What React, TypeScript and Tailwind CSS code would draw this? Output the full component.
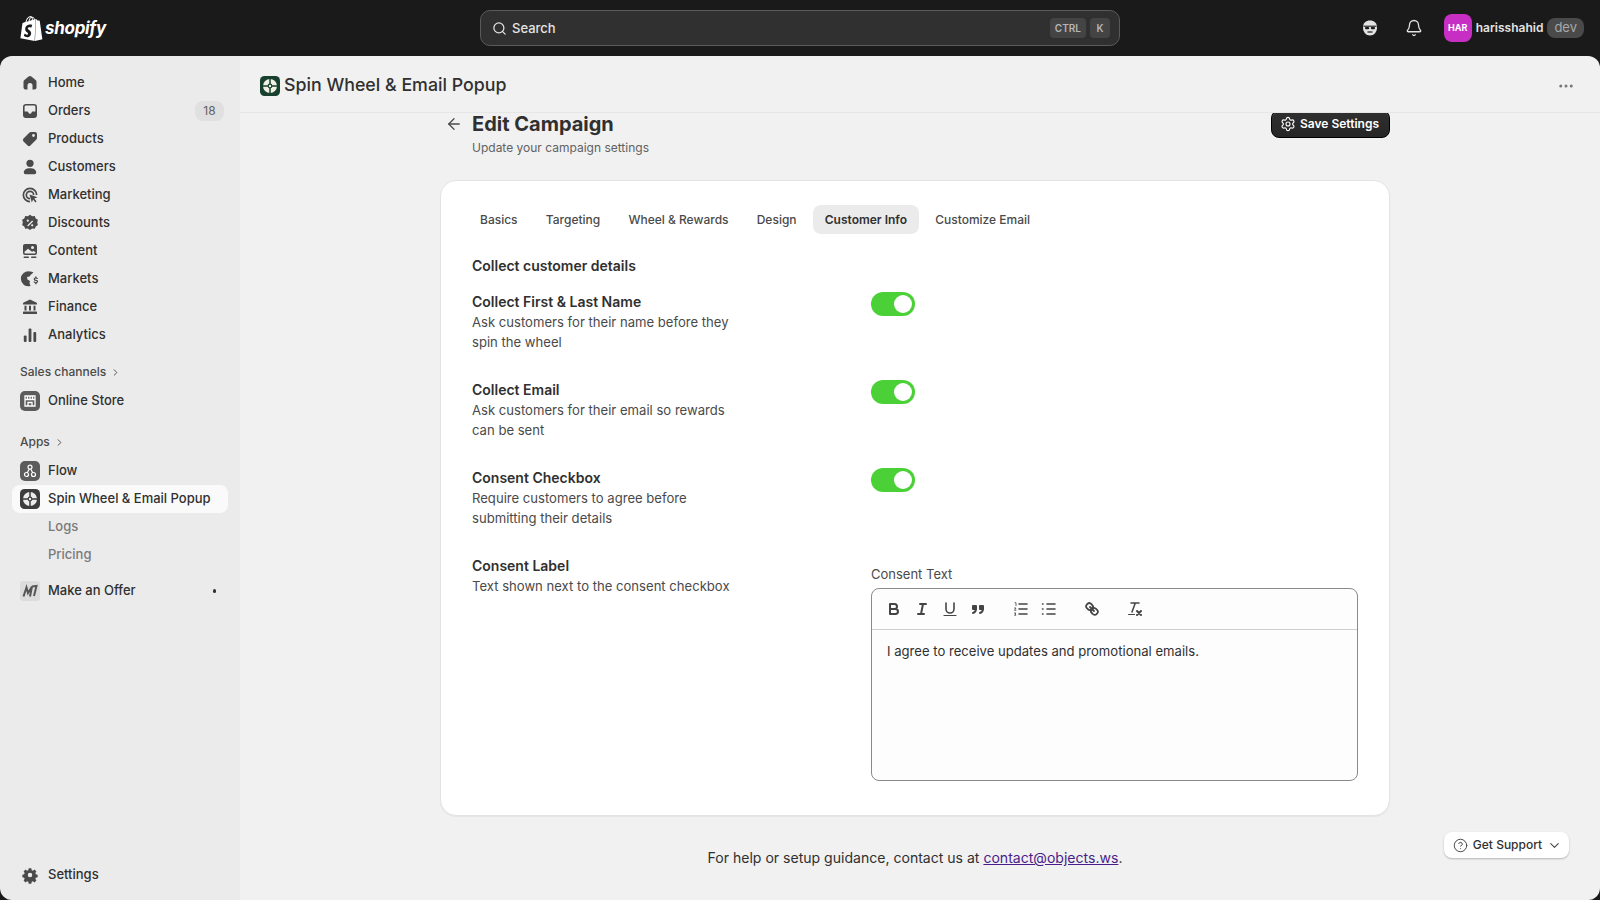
import { ArrowLeft, Bell, ChevronDown, ChevronRight, CircleHelp, Ellipsis, Search, Settings } from "lucide-react"
import { SiShopify } from "react-icons/si"
import type { ReactNode } from "react"

function Ico({ children, size = 20 }: { children: ReactNode; size?: number }) {
  return (
    <svg width={size} height={size} viewBox="0 0 20 20" fill="currentColor" className="shrink-0">
      {children}
    </svg>
  )
}

const HomeIcon = () => <Ico><path d="M8.6 3.6a2.2 2.2 0 0 1 2.8 0l4.2 3.4c.6.4.9 1.1.9 1.8v5.7c0 1.1-.9 2-2 2h-2v-4a2.5 2.5 0 0 0-5 0v4h-2a2 2 0 0 1-2-2V8.800c0-.7.3-1.400.9-1.800z" /></Ico>
const OrdersIcon = () => <Ico><path fillRule="evenodd" d="M6 3h8a3 3 0 0 1 3 3v8a3 3 0 0 1-3 3H6a3 3 0 0 1-3-3V6a3 3 0 0 1 3-3m-1.400 7.500V6c0-.8.6-1.400 1.400-1.400h8c.8 0 1.400.6 1.400 1.400v4.500h-2.400c-.8 0-1.300.5-1.500 1.200-.2.600-.7 1-1.500 1s-1.300-.4-1.500-1c-.2-.7-.7-1.200-1.500-1.200z" /></Ico>
const TagIcon = () => <Ico><path fillRule="evenodd" d="M11 3h4a2 2 0 0 1 2 2v4c0 .6-.2 1.100-.6 1.500l-6 6a2 2 0 0 1-2.800 0l-4.100-4.100a2 2 0 0 1 0-2.800l6-6c.4-.4.9-.6 1.500-.6m2.500 4.900a1.400 1.400 0 1 0 0-2.800 1.400 1.400 0 0 0 0 2.800" /></Ico>
const PersonIcon = () => <Ico><circle cx="10" cy="6.300" r="3.600" /><path d="M3.800 15.500c0-2.700 2.500-4.200 6.200-4.200s6.200 1.500 6.200 4.200c0 1-.8 1.700-1.700 1.700h-9c-.9 0-1.700-.7-1.700-1.700" /></Ico>
const TargetIcon = () => (
  <Ico>
    <path d="M10 2.500a7.500 7.500 0 0 1 7.500 7.500h-1.700A5.800 5.800 0 1 0 10 15.800v1.700a7.500 7.500 0 0 1 0-15" />
    <path d="M10 5.500a4.500 4.500 0 0 1 4.500 4.500h-1.700A2.800 2.800 0 1 0 10 12.800v1.700a4.500 4.500 0 0 1 0-9" />
    <path d="M9.500 9.500l8 2.700-3.200 1.400 2.300 2.800-1.200 1-2.300-2.800-1.300 3z" />
  </Ico>
)
const DiscountIcon = () => (
  <Ico>
    <path fillRule="evenodd" d="M10 1.800l2.200 1.400 2.600-.2.900 2.400 2.200 1.400-.7 2.600.7 2.600-2.200 1.400-.9 2.400-2.600-.2-2.200 1.400-2.200-1.400-2.600.2-.9-2.400-2.200-1.400.7-2.600-.7-2.600 2.200-1.400.9-2.400 2.600.2zM7.800 8.800a1.100 1.100 0 1 0 0-2.200 1.100 1.100 0 0 0 0 2.200m4.400 4.600a1.100 1.100 0 1 0 0-2.200 1.100 1.100 0 0 0 0 2.200m-5-.9l.9.9 5-5-.9-.9z" />
  </Ico>
)
const ContentIcon = () => (
  <Ico>
    <path fillRule="evenodd" d="M5 3h10a2 2 0 0 1 2 2v7a2 2 0 0 1-2 2H5a2 2 0 0 1-2-2V5c0-1.100.9-2 2-2m7.500 5a1.500 1.500 0 1 0 0-3 1.500 1.500 0 0 0 0 3M4.500 10.800V11.800c0 .4.300.7.700.7h9.600c.4 0 .7-.3.7-.7V11l-2-1-1.500.8-4-3z" />
    <rect x="3.500" y="15.500" width="5.500" height="1.500" rx=".7" />
    <rect x="11" y="15.500" width="5.500" height="1.500" rx=".7" />
  </Ico>
)
const MarketsIcon = () => (
  <Ico>
    <path d="M10 2.500c1.300 0 2.500.3 3.500.9L11 5.500l-1.500 2-2.500.5.500 2.500 2.500 1.500-.5 2 1 3a7.500 7.500 0 1 1-.5-14.500" />
    <path d="M15.200 7.500h1.300v1.100c.8.200 1.400.7 1.500 1.500h-1.300c-.1-.4-.4-.6-.9-.6s-.9.200-.9.600c0 .3.300.5 1 .6 1.300.2 2.200.7 2.200 1.800 0 .9-.7 1.500-1.600 1.700v1.100h-1.300v-1.100c-1-.2-1.600-.8-1.700-1.700h1.300c.1.400.5.700 1.100.7s1-.2 1-.6c0-.3-.3-.5-1.100-.6-1.200-.2-2.100-.6-2.100-1.800 0-.9.700-1.500 1.500-1.700z" />
  </Ico>
)
const BankIcon = () => (
  <Ico>
    <path d="M10 2.500l6.300 3c.5.200.7.600.7 1.100v.9H3v-.9c0-.5.200-.9.700-1.100z" />
    <rect x="4.500" y="8.700" width="2" height="4.800" /><rect x="9" y="8.700" width="2" height="4.800" /><rect x="13.500" y="8.700" width="2" height="4.800" />
    <rect x="3" y="14.500" width="14" height="2.500" rx=".6" />
  </Ico>
)
const ChartIcon = () => (
  <Ico>
    <rect x="3.800" y="10.500" width="2.800" height="6.500" rx="1" /><rect x="8.600" y="3.500" width="2.800" height="13.500" rx="1" /><rect x="13.400" y="7" width="2.800" height="10" rx="1" />
  </Ico>
)

// white disc split into four lobes by dark spokes, small white hub in the middle
function WheelMark({ bg, hub = "#ececec" }: { bg: string; hub?: string }) {
  return (
    <svg width="20" height="20" viewBox="0 0 20 20" className="shrink-0">
      <rect width="20" height="20" rx="4.500" fill={bg} />
      <circle cx="10" cy="10" r="7" fill={hub} />
      <path d="M10 2.500v15M2.500 10h15" stroke={bg} strokeWidth="1.500" />
      <circle cx="10" cy="10" r="2.400" fill={bg} />
      <circle cx="10" cy="10" r="1.200" fill={hub} />
    </svg>
  )
}

function AppTile({ children }: { children: ReactNode }) {
  return <span className="flex h-5 w-5 shrink-0 items-center justify-center rounded-[5px] bg-[#5c5c5c] text-white">{children}</span>
}

const StoreIcon = () => (
  <AppTile>
    <svg width="16" height="16" viewBox="0 0 16 16" fill="none" stroke="currentColor" strokeWidth="1.300">
      <path d="M3 3h10v10H3zM3 6.500h10M5.500 3v3.500M8 3v3.500M10.500 3v3.500M6 13V9.500h4V13" />
    </svg>
  </AppTile>
)
const FlowIcon = () => (
  <AppTile>
    <svg width="16" height="16" viewBox="0 0 16 16" fill="none" stroke="currentColor" strokeWidth="1.200">
      <circle cx="8" cy="4.200" r="2" /><circle cx="4.500" cy="11.500" r="2" /><circle cx="11.500" cy="11.500" r="2" />
      <path d="M7.200 6L5.300 9.700M8.800 6l1.900 3.700" />
    </svg>
  </AppTile>
)
const OfferIcon = () => (
  <span className="flex h-5 w-5 shrink-0 items-center justify-center rounded-[3px] bg-[#dcdcdc] text-[#555]">
    <svg width="16" height="14" viewBox="0 0 16 14" fill="none" stroke="currentColor" strokeWidth="2">
      <path d="M1.500 12.500L4.500 3.500 6 9l4-6.500-2 10M10 2.500L14.500 2 12 12" />
    </svg>
  </span>
)

function NavItem({ icon, label, badge, active, dot }: { icon?: ReactNode; label: string; badge?: string; active?: boolean; dot?: boolean }) {
  return (
    <div className={`flex h-7 items-center rounded-lg pr-1 text-[#303030] ${active ? "mx-3 bg-[#fafafa] pl-[8px]" : "pl-5"}`}>
      <span className="flex w-5 shrink-0 justify-center text-[#4a4a4a]">{icon}</span>
      <span className="ml-2 flex-1 text-[13px] font-medium">{label}</span>
      {badge && <span className="mr-3 flex h-5 w-[29px] items-center justify-center rounded-lg bg-[#e0e0e0] text-xs text-[#616161]">{badge}</span>}
      {dot && <span className="mr-[20px] h-[3.500px] w-[3.500px] rounded-full bg-[#303030]" />}
    </div>
  )
}

function SubItem({ label }: { label: string }) {
  return <div className="flex h-7 items-center pl-12 text-[13px] font-medium text-[#7a7a7a]">{label}</div>
}

function SectionLabel({ label }: { label: string }) {
  return (
    <div className="flex h-7 items-center gap-1 pl-5 text-xs font-medium text-[#4a4a4a]">
      {label}
      <ChevronRight size={11} strokeWidth={2} />
    </div>
  )
}

function Sidebar() {
  return (
    <aside className="flex w-[240px] shrink-0 flex-col bg-[#ebebeb] pt-[13px] pb-[11px]">
      <NavItem icon={<HomeIcon />} label="Home" />
      <NavItem icon={<OrdersIcon />} label="Orders" badge="18" />
      <NavItem icon={<TagIcon />} label="Products" />
      <NavItem icon={<PersonIcon />} label="Customers" />
      <NavItem icon={<TargetIcon />} label="Marketing" />
      <NavItem icon={<DiscountIcon />} label="Discounts" />
      <NavItem icon={<ContentIcon />} label="Content" />
      <NavItem icon={<MarketsIcon />} label="Markets" />
      <NavItem icon={<BankIcon />} label="Finance" />
      <NavItem icon={<ChartIcon />} label="Analytics" />
      <div className="mt-[9px] mb-px"><SectionLabel label="Sales channels" /></div>
      <NavItem icon={<StoreIcon />} label="Online Store" />
      <div className="mt-[13px] mb-px"><SectionLabel label="Apps" /></div>
      <NavItem icon={<FlowIcon />} label="Flow" />
      <NavItem icon={<WheelMark bg="#3d3d3d" />} label="Spin Wheel & Email Popup" active />
      <SubItem label="Logs" />
      <SubItem label="Pricing" />
      <div className="mt-2"><NavItem icon={<OfferIcon />} label="Make an Offer" dot /></div>
      <div className="mt-auto">
        <NavItem
          icon={<Ico><path fillRule="evenodd" d="M8.500 2.500h3l.4 2.100 1.300.6 1.800-1.200 2.100 2.100-1.200 1.800.6 1.300 2 .4v3l-2 .4-.6 1.300 1.200 1.800-2.100 2.100-1.800-1.200-1.300.6-.4 2h-3l-.4-2-1.300-.6-1.800 1.200-2.100-2.100 1.200-1.800-.6-1.300-2-.4v-3l2-.4.6-1.300-1.200-1.800 2.100-2.100 1.800 1.200 1.300-.6zM10 12.500a2.500 2.500 0 1 0 0-5 2.500 2.500 0 0 0 0 5" transform="translate(1 1) scale(.9)" /></Ico>}
          label="Settings"
        />
      </div>
    </aside>
  )
}

function TopBar() {
  return (
    <header className="flex h-14 shrink-0 items-center bg-[#1a1a1a] text-white">
      <div className="flex w-[480px] items-center pl-[19px]">
        <SiShopify size={25} className="text-white" />
        <span className="ml-[1px] text-[17px] leading-none font-bold tracking-[-0.3px] italic">shopify</span>
      </div>
      <div className="flex h-9 w-[640px] items-center rounded-[10px] border border-[#5a5a5a] bg-[#303030] pr-[9px] pl-[11px] text-[13px] font-medium text-[#e3e3e3]">
        <Search size={15} strokeWidth={2} />
        <span className="mt-px ml-[5px] flex-1">Search</span>
        <span className="flex h-5 items-center rounded bg-[#444] px-[5px] text-[10px] font-semibold text-[#b5b5b5]">CTRL</span>
        <span className="ml-[4px] flex h-5 w-5 items-center justify-center rounded bg-[#444] text-[10px] font-semibold text-[#b5b5b5]">K</span>
      </div>
      <div className="flex flex-1 items-center justify-end pr-[16px]">
        <svg width="18" height="20" viewBox="0 0 18 20" fill="none" className="text-[#e3e3e3]">
          <path d="M2 9.500C2 5 5 2.500 9 2.500s7 2.500 7 7-3 8-7 8-7-3.500-7-8" fill="currentColor" />
          <path d="M2.500 8.200h13" stroke="#1a1a1a" strokeWidth="1.100" />
          <rect x="4" y="9" width="4.200" height="2.300" rx="1.100" fill="#1a1a1a" />
          <rect x="9.800" y="9" width="4.200" height="2.300" rx="1.100" fill="#1a1a1a" />
          <path d="M6.500 14h5" stroke="#1a1a1a" strokeWidth="1.200" />
        </svg>
        <Bell size={18} strokeWidth={1.700} className="ml-[26px] text-[#e3e3e3]" />
        <span className="ml-[21px] flex h-7 w-7 items-center justify-center rounded-lg bg-[#c72fc4] text-[9px] font-bold">HAR</span>
        <span className="ml-1 text-xs font-semibold text-[#e3e3e3]">harisshahid</span>
        <span className="ml-1 flex h-5 items-center rounded-lg bg-[#4a4a4a] px-[7px] text-[13px] text-[#a8a8a8]">dev</span>
      </div>
    </header>
  )
}

function Toggle() {
  return (
    <div className="flex h-6 w-11 items-center justify-end rounded-full bg-[#4bd137] pr-[3px]">
      <span className="h-[18px] w-[18px] rounded-full bg-white" />
    </div>
  )
}

function FieldRow({ title, lines }: { title: string; lines: string[] }) {
  return (
    <div className="flex h-[88px]">
      <div className="w-[399px] shrink-0">
        <div className="text-sm leading-5 font-semibold text-[#303030]">{title}</div>
        {lines.map((line) => (
          <div key={line} className="text-[13.100px] leading-5 text-[#4a4a4a]">{line}</div>
        ))}
      </div>
      <Toggle />
    </div>
  )
}

function ToolIcon({ children, className }: { children: ReactNode; className?: string }) {
  return (
    <svg width="18" height="18" viewBox="0 0 18 18" fill="none" stroke="#444" strokeWidth="2" strokeLinecap="round" strokeLinejoin="round" className={className}>
      {children}
    </svg>
  )
}

function EditorToolbar() {
  return (
    <div className="flex h-[41px] items-center border-b border-[#cfcfcf] pl-[13px]">
      <ToolIcon><path d="M5 4h4.500a2.500 2.500 0 0 1 0 5H5zM5 9h5.500a2.500 2.500 0 0 1 0 5H5z" /></ToolIcon>
      <ToolIcon className="ml-[10px]"><path d="M7 4h6M5 14h6M8 14l2-10" /></ToolIcon>
      <ToolIcon className="ml-[10px]">
        <path d="M5 3v6a4 4 0 0 0 8 0V3" strokeWidth="1.600" /><path d="M3 15.500h12" strokeWidth="1.200" />
      </ToolIcon>
      <ToolIcon className="ml-[10px]">
        <path d="M4 6h3v3H4zM11 6h3v3h-3z" fill="#444" /><path d="M7 8.500C7 11 5.500 12.500 4 13M14 8.500c0 2.500-1.500 4-3 4.500" />
      </ToolIcon>
      <ToolIcon className="ml-[25px]">
        <path d="M7 4h8M7 9h8M7 14h8" strokeWidth="1.600" /><path d="M3 2.700h1v3M2.500 8h1.500L2.500 10.300H4M2.500 13h1.500L3 14l1 1.200H2.500" strokeWidth=".8" />
      </ToolIcon>
      <ToolIcon className="ml-[10px]">
        <path d="M7 4h8M7 9h8M7 14h8M2.500 4h.5M2.500 9h.5M2.500 14h.5" strokeWidth="1.600" />
      </ToolIcon>
      <ToolIcon className="ml-[25px]">
        <path d="M7 7l4 4" strokeWidth="1.800" />
        <path d="M8.900 4.600a3.500 3.500 0 0 1 .4 4.700 3.500 3.500 0 0 1-4.700-.4C3.200 7.500 2 6.400 4.200 4.200S7.500 3.200 8.900 4.600z" strokeWidth="1.800" />
        <path d="M13.400 9.100a3.500 3.500 0 0 0-4.700-.4 3.500 3.500 0 0 0 .4 4.700c1.400 1.400 2.500 2.500 4.700.4s1-3.300-.4-4.700z" strokeWidth="1.800" />
      </ToolIcon>
      <ToolIcon className="ml-[25px]">
        <path d="M5 3h8M6 12l3.300-9" strokeWidth="1.500" /><path d="M11 11l4 4M15 11l-4 4" /><path d="M2.500 14.500h6" strokeWidth="1" />
      </ToolIcon>
    </div>
  )
}

function CampaignCard() {
  const tabs = ["Basics", "Targeting", "Wheel & Rewards", "Design", "Customer Info", "Customize Email"]
  return (
    <section className="mt-[22px] w-[950px] rounded-2xl border border-[#e3e3e3] bg-white pt-6 pr-[31px] pb-[34px] pl-[31px] shadow-[0_1px_1px_rgba(0,0,0,0.05)]">
      <div className="-ml-[4px] flex items-center gap-[4.200px] text-xs font-medium text-[#4a4a4a]">
        {tabs.map((tab) => (
          <div key={tab} className={`flex h-[29px] items-center rounded-lg px-3 ${tab === "Customer Info" ? "bg-[#ebebeb] font-semibold text-[#303030]" : ""}`}>
            {tab}
          </div>
        ))}
      </div>
      <h2 className="mt-[22px] text-sm leading-5 font-semibold text-[#303030]">Collect customer details</h2>
      <div className="mt-4">
        <FieldRow title="Collect First & Last Name" lines={["Ask customers for their name before they", "spin the wheel"]} />
        <FieldRow title="Collect Email" lines={["Ask customers for their email so rewards", "can be sent"]} />
        <FieldRow title="Consent Checkbox" lines={["Require customers to agree before", "submitting their details"]} />
        <div className="flex">
          <div className="w-[399px] shrink-0">
            <div className="text-sm leading-5 font-semibold text-[#303030]">Consent Label</div>
            <div className="text-[13.100px] leading-5 text-[#4a4a4a]">Text shown next to the consent checkbox</div>
          </div>
          <div className="flex-1 pt-[8px]">
            <div className="text-[13px] leading-5 text-[#4a4a4a]">Consent Text</div>
            <div className="mt-[4px] h-[193px] overflow-hidden rounded-lg border border-[#8a8a8a] bg-[#fdfdfd]">
              <EditorToolbar />
              <p className="px-[15px] pt-[11px] text-[13.100px] leading-5 text-[#303030]">I agree to receive updates and promotional emails.</p>
            </div>
          </div>
        </div>
      </div>
    </section>
  )
}

function Main() {
  return (
    <main className="relative flex min-w-0 flex-1 flex-col bg-[#f1f1f1]">
      <div className="flex h-[57px] shrink-0 items-center border-b border-[#e6e6e6] pt-[3px] pr-[25px] pl-5">
        <WheelMark bg="#17402f" hub="#f0f0e4" />
        <h1 className="ml-[4px] flex-1 text-[17.800px] font-medium text-[#303030]">Spin Wheel & Email Popup</h1>
        <Ellipsis size={18} className="text-[#777]" />
      </div>
      <div className="flex flex-1 flex-col items-center overflow-hidden pr-[10px]">
        <div className="flex w-[950px] items-start">
          <ArrowLeft size={18} strokeWidth={1.700} className="mt-[2px] ml-[5px] text-[#4a4a4a]" />
          <div className="ml-[9px] flex-1">
            <div className="-mt-px text-[20px] leading-[24px] font-bold text-[#303030]">Edit Campaign</div>
            <div className="mt-[2px] text-xs leading-5 text-[#616161]">Update your campaign settings</div>
          </div>
          <button className="-mt-[3px] flex h-7 w-[119px] items-center justify-center gap-[4px] rounded-lg border border-black bg-gradient-to-b from-[#303030] to-[#262626] pr-[2px] text-xs font-semibold text-white shadow-[inset_0_1px_0_rgba(255,255,255,0.15)]">
            <Settings size={16} strokeWidth={1.700} />
            Save Settings
          </button>
        </div>
        <CampaignCard />
        <p className="mt-[32px] text-[14.060px] leading-5 text-[#303030]">
          For help or setup guidance, contact us at <span className="text-[#4a1d8c] underline">contact@objects.ws</span>.
        </p>
      </div>
      <button className="absolute right-[31px] bottom-[42px] flex h-[26px] w-[125px] items-center justify-center gap-[5px] rounded-lg bg-white pl-[2px] text-xs font-medium text-[#303030] shadow-[0_1px_2px_rgba(0,0,0,0.25)]">
        <CircleHelp size={15} strokeWidth={1.600} className="text-[#4a4a4a]" />
        Get Support
        <ChevronDown size={15} strokeWidth={1.800} className="text-[#4a4a4a]" />
      </button>
    </main>
  )
}

export default function App() {
  return (
    <div className="flex h-screen flex-col overflow-hidden bg-[#1a1a1a] font-['Inter',sans-serif]">
      <TopBar />
      <div className="flex min-h-0 flex-1 overflow-hidden rounded-xl">
        <Sidebar />
        <Main />
      </div>
    </div>
  )
}
